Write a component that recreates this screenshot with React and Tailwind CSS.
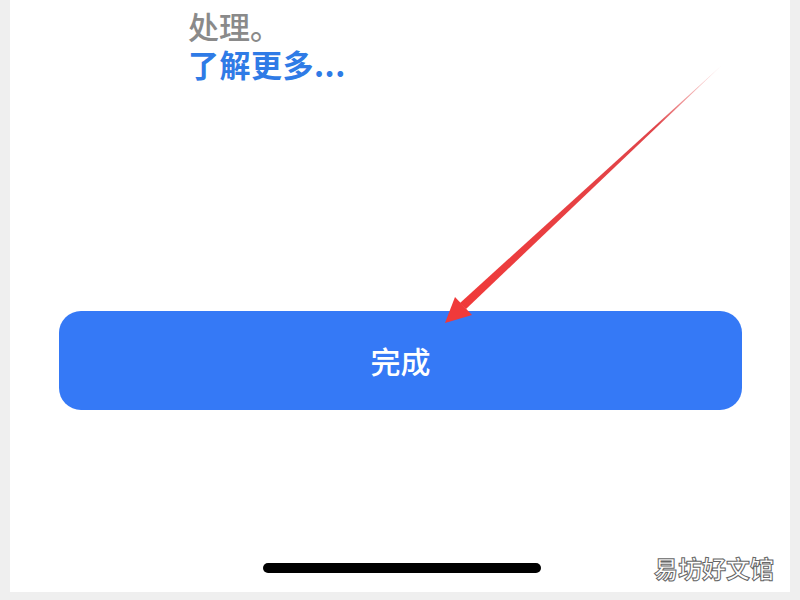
export default function App() {
  return (
    <div className="relative w-[800px] h-[600px] bg-[#efefef] flex overflow-hidden font-['Noto_Sans_CJK_SC','Noto_Sans',sans-serif]">
      {/* white phone panel */}
      <div className="ml-[10px] w-[780px] h-[592px] bg-white flex flex-col">
        <div className="pl-[178px] pt-[8px] flex flex-col">
          <span className="text-[31px] leading-[36px] font-medium text-[#8a8a8a]">处理。</span>
          <span className="mt-[2px] text-[31px] leading-[36px] font-semibold text-[#2f7be6] tracking-[0.5px]">了解更多...</span>
        </div>

        <button className="mt-[229px] ml-[49px] w-[683px] h-[99px] rounded-[22px] bg-[#3579f6] text-white text-[30px] font-medium flex items-center justify-center">
          完成
        </button>

        <div className="mt-auto mb-[10px] flex items-center justify-between pl-[253px] pr-[16px]">
          <div className="w-[278px] h-[10px] rounded-full bg-black" />
          <span className="text-[24px] leading-[28px] font-bold text-white [-webkit-text-stroke:1px_#666]">
            易坊好文馆
          </span>
        </div>
      </div>

      {/* annotation arrow */}
      <svg className="absolute left-0 top-0 pointer-events-none" width="800" height="600" viewBox="0 0 800 600">
        <defs>
          <linearGradient id="shaft" x1="722" y1="65" x2="463" y2="306" gradientUnits="userSpaceOnUse">
            <stop offset="0" stopColor="#f4a0a0" stopOpacity="0.3" />
            <stop offset="0.25" stopColor="#e0454a" />
            <stop offset="1" stopColor="#f03a3a" />
          </linearGradient>
        </defs>
        <polygon points="722,65 466,309 460,303" fill="url(#shaft)" />
        <polygon points="445,323 455,297 472,315" fill="#f03a3a" />
      </svg>
    </div>
  );
}
